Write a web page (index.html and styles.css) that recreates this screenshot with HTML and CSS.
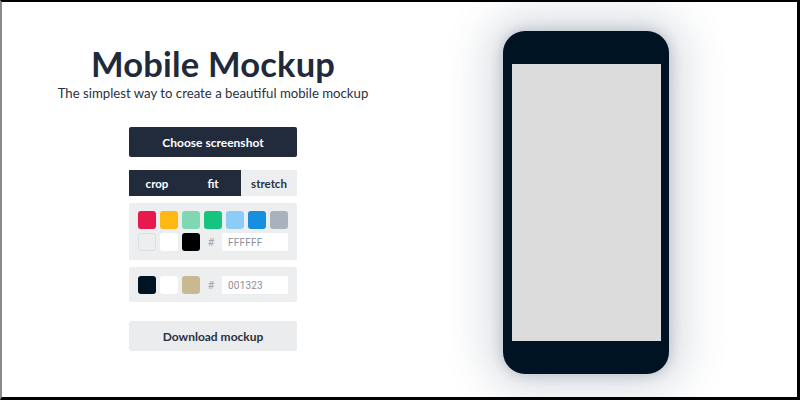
FILE: index.html
```html
<!DOCTYPE html>
<html>
<head>
<meta charset="utf-8">
<link rel="stylesheet" href="styles.css">
</head>
<body>
<div class="frame">
  <div class="left">
    <h1 class="title">Mobile Mockup</h1>
    <p class="subtitle">The simplest way to create a beautiful mobile mockup</p>
    <button class="btn btn-dark">Choose screenshot</button>
    <div class="segment">
      <span class="seg seg-on">crop</span>
      <span class="seg seg-on">fit</span>
      <span class="seg">stretch</span>
    </div>
    <div class="panel panel-a">
      <div class="row">
        <span class="sw" style="background:#e8194d"></span>
        <span class="sw" style="background:#fdb813"></span>
        <span class="sw" style="background:#7fd8b2"></span>
        <span class="sw" style="background:#14c47f"></span>
        <span class="sw" style="background:#8ccdf7"></span>
        <span class="sw" style="background:#168fe0"></span>
        <span class="sw" style="background:#a8b2bd"></span>
      </div>
      <div class="row">
        <span class="sw sw-light"></span>
        <span class="sw" style="background:#ffffff"></span>
        <span class="sw" style="background:#000000"></span>
        <span class="hash">#</span>
        <span class="hex">FFFFFF</span>
      </div>
    </div>
    <div class="panel panel-b">
      <div class="row">
        <span class="sw" style="background:#001323"></span>
        <span class="sw" style="background:#ffffff"></span>
        <span class="sw" style="background:#c9b990"></span>
        <span class="hash">#</span>
        <span class="hex">001323</span>
      </div>
    </div>
    <button class="btn btn-light">Download mockup</button>
  </div>
  <div class="right">
    <div class="phone"><div class="screen"></div></div>
  </div>
</div>
</body>
</html>
```
FILE: styles.css
```css
* { box-sizing: border-box; }
html, body { margin: 0; padding: 0; background: #fff; }
body { font-family: Lato, "Open Sans", sans-serif; }
.frame {
  width: 800px; height: 400px;
  border-top: 2px solid #000;
  border-left: 2px solid #8a8a8a;
  border-right: 3px solid #000;
  border-bottom: 3px solid #000;
  display: flex;
  overflow: hidden;
}
.left {
  width: 422px;
  display: flex; flex-direction: column; align-items: center;
  padding-top: 42px;
}
.title {
  margin: 0; font-size: 34.5px; font-weight: 700; color: #1f2a3b;
  line-height: 40px; letter-spacing: 0.2px;
}
.subtitle {
  margin: 0 0 25px 0; font-size: 13.2px; color: #2a3140; line-height: 18px;
}
.btn {
  width: 168px; height: 30px; border: 0; border-radius: 2px;
  font-family: Lato, sans-serif; font-size: 12px; font-weight: 700;
  padding: 0;
}
.btn-dark { background: #222b3b; color: #fff; }
.btn-light { background: #eaecee; color: #2a3140; margin-top: 19px; }
.segment {
  width: 168px; height: 26px; margin-top: 13px; display: flex;
}
.seg {
  flex: 1; display: flex; align-items: center; justify-content: center;
  font-size: 11.5px; font-weight: 700; background: #eceef0; color: #2a3140;
}
.seg-on { background: #222b3b; color: #fff; }
.panel {
  width: 168px; background: #eceef0; border-radius: 2px;
  padding: 8px 9px 9px; display: flex; flex-direction: column; gap: 4px;
}
.panel-a { margin-top: 7px; }
.panel-b { margin-top: 7px; padding: 9px 9px 8px; }
.row { display: flex; gap: 4px; align-items: center; height: 18px; }
.sw { width: 18px; height: 18px; border-radius: 3px; flex: none; }
.sw-light { background: #eceef0; border: 1px solid #dcdee1; }
.hash {
  width: 14px; text-align: center; font-family: Roboto, sans-serif;
  font-size: 11px; color: #a0a4aa;
}
.hex {
  width: 66px; height: 18px; background: #fff; font-family: Roboto, sans-serif;
  font-size: 10px; color: #8b9098; display: flex; align-items: center;
  padding-left: 6px; letter-spacing: 0.2px;
}
.right { flex: 1; }
.phone {
  margin-left: 79px; margin-top: 29px;
  width: 166px; height: 343px; border-radius: 22px;
  background: #001323; padding: 33px 8px 33px 9px;
  box-shadow: 0 0 12px 2px rgba(40, 60, 90, 0.18), 0 0 45px 14px rgba(50, 70, 100, 0.2);
}
.screen { width: 149px; height: 277px; background: #dcdcdc; }
```
